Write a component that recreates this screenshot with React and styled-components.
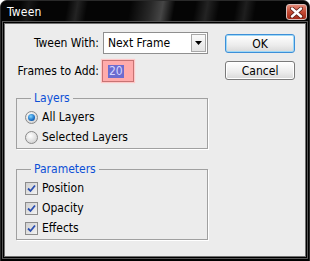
import styled, { createGlobalStyle } from 'styled-components';

const GlobalStyle = createGlobalStyle`
	html, body {
		margin: 0;
		padding: 0;
		background: #fff;
		overflow: hidden;
	}
	body {
		font-family: "DejaVu Sans Condensed", "DejaVu Sans", sans-serif;
		font-size: 12px;
	}
`;

const App = () => {
	return (
		<>
			<GlobalStyle />
			<Window>
				<TitleBar>
					<Title>Tween</Title>
					<CloseButton aria-label="close">
						<svg width="13" height="11" viewBox="0 0 13 11">
							<path d="M2 1.5 L11 9.5 M11 1.5 L2 9.5" stroke="#5a1a12" strokeWidth="4" strokeLinecap="round" />
							<path d="M2 1.5 L11 9.5 M11 1.5 L2 9.5" stroke="#fff" strokeWidth="2.4" strokeLinecap="round" />
						</svg>
					</CloseButton>
				</TitleBar>

				<Body>
					<MainColumn>
						<FormGrid>
							<Label>Tween With:</Label>
							<Select>
								<span>Next Frame</span>
								<DropButton>
									<svg width="7" height="4" viewBox="0 0 7 4">
										<path d="M0 0 H7 L3.5 4 Z" fill="#000" />
									</svg>
								</DropButton>
							</Select>

							<Label>Frames to Add:</Label>
							<NumberInput>
								<Selected>20</Selected>
							</NumberInput>
						</FormGrid>

						<Group>
							<Legend>Layers</Legend>
							<Option>
								<Radio $checked />
								All Layers
							</Option>
							<Option>
								<Radio />
								Selected Layers
							</Option>
						</Group>

						<Group $spaced>
							<Legend>Parameters</Legend>
							<Option>
								<CheckBox />
								Position
							</Option>
							<Option>
								<CheckBox />
								Opacity
							</Option>
							<Option>
								<CheckBox />
								Effects
							</Option>
						</Group>
					</MainColumn>

					<ButtonColumn>
						<Button $default>OK</Button>
						<Button>Cancel</Button>
					</ButtonColumn>
				</Body>
			</Window>
		</>
	);
};

const CheckBox = () => (
	<CheckFrame>
		<svg width="9" height="9" viewBox="0 0 9 9">
			<path d="M1 4.5 L3.5 7 L8 1.5" stroke="#2b4fb0" strokeWidth="1.8" fill="none" />
		</svg>
	</CheckFrame>
);

export default App;

const Window = styled.div`
	width: 310px;
	height: 261px;
	box-sizing: border-box;
	background: #000;
	border-radius: 7px 7px 0 0;
	border: 1px solid #2a2a2a;
	border-bottom: none;
	display: flex;
	flex-direction: column;
	padding: 0 2px 3px 2px;
`;

const TitleBar = styled.div`
	height: 22px;
	flex-shrink: 0;
	display: flex;
	align-items: center;
	justify-content: space-between;
	padding: 0 2px 0 6px;
	margin: 0 -2px;
	border-radius: 6px 6px 0 0;
	background:
		linear-gradient(100deg, transparent 20px, rgba(255,255,255,0.07) 28px, transparent 38px),
		linear-gradient(100deg, transparent 66px, rgba(255,255,255,0.12) 76px, transparent 86px),
		linear-gradient(100deg, transparent 128px, rgba(255,255,255,0.14) 148px, rgba(255,255,255,0.26) 160px, transparent 172px),
		linear-gradient(100deg, transparent 192px, rgba(255,255,255,0.12) 204px, transparent 216px),
		linear-gradient(100deg, transparent 232px, rgba(255,255,255,0.1) 242px, transparent 252px),
		#050505;
`;

const Title = styled.span`
	color: #fff;
	font-size: 12px;
	letter-spacing: 0.2px;
	text-shadow: 0 0 1px #000;
`;

const CloseButton = styled.button`
	width: 21px;
	height: 16px;
	padding: 0;
	border: 1px solid #d8c0bc;
	border-radius: 3px;
	background: linear-gradient(#e38a78, #c44a34 50%, #a22a18);
	display: flex;
	align-items: center;
	justify-content: center;
`;

const Body = styled.div`
	flex: 1;
	background: #ececec;
	border: 1px solid #707070;
	box-shadow: 0 0 0 1px #000, 0 0 0 2px #555;
	margin: 0 1px 1px;
	display: flex;
	gap: 17px;
	padding: 8px 10px 0 9px;
	color: #000;
`;

const MainColumn = styled.div`
	width: 195px;
	display: flex;
	flex-direction: column;
`;

const FormGrid = styled.div`
	display: grid;
	grid-template-columns: 89px 1fr;
	row-gap: 6px;
	align-items: center;
	margin-bottom: 9px;
`;

const Label = styled.span`
	text-align: right;
	padding-right: 4px;
	white-space: nowrap;
`;

const Select = styled.div`
	height: 22px;
	box-sizing: border-box;
	border: 1px solid #8f8f8f;
	background: #fff;
	display: flex;
	align-items: center;
	justify-content: space-between;
	padding: 0 1px 0 4px;
`;

const DropButton = styled.span`
	width: 15px;
	height: 18px;
	box-sizing: border-box;
	border: 1px solid #a8a8a8;
	background: linear-gradient(#fafafa, #e4e4e4);
	display: flex;
	align-items: center;
	justify-content: center;
`;

const NumberInput = styled.div`
	width: 32px;
	height: 22px;
	margin-left: -1px;
	box-sizing: border-box;
	border: 1px solid #c77373;
	background: #ffabab;
	box-shadow: 0 0 1px 1px #ffc8c8;
	display: flex;
	align-items: center;
	padding-left: 5px;
`;

const Selected = styled.span`
	background: #6c6ccf;
	color: #d6d6ff;
	line-height: 13px;
	padding: 0 1px;
`;

const Group = styled.fieldset`
	margin: ${(p) => (p.$spaced ? '13px' : '0')} 0 0 2px;
	padding: 2px 0 1px 8px;
	border: 1px solid #a0a0a0;
	box-shadow: 1px 1px 0 #fff;
	min-width: 0;
`;

const Legend = styled.legend`
	color: #0b4fd6;
	padding: 0 3px;
	margin-left: 6px;
	line-height: 14px;
`;

const Option = styled.div`
	height: 20px;
	display: flex;
	align-items: center;
	gap: 4px;
`;

const Radio = styled.span`
	width: 13px;
	height: 13px;
	box-sizing: border-box;
	border-radius: 50%;
	border: 1px solid #8a8a8a;
	background: radial-gradient(circle at 40% 35%, #ffffff, #d8d8d8 70%, #c4c4c4);
	display: flex;
	align-items: center;
	justify-content: center;

	&::after {
		content: '';
		width: 7px;
		height: 7px;
		border-radius: 50%;
		display: ${(p) => (p.$checked ? 'block' : 'none')};
		background: radial-gradient(circle at 40% 35%, #7fd4ff, #1a6fc4 60%, #0b3e86);
	}
`;

const CheckFrame = styled.span`
	width: 13px;
	height: 13px;
	box-sizing: border-box;
	border: 1px solid #8c8c8c;
	background: linear-gradient(135deg, #d0d0d0, #f2f2f2);
	display: flex;
	align-items: center;
	justify-content: center;
`;

const ButtonColumn = styled.div`
	width: 70px;
	display: flex;
	flex-direction: column;
	gap: 8px;
	padding-top: 2px;
`;

const Button = styled.button`
	height: 19px;
	padding: 0;
	font: inherit;
	color: #000;
	border-radius: 3px;
	border: 1px solid ${(p) => (p.$default ? '#3c8fd8' : '#7a7a7a')};
	box-shadow: ${(p) => (p.$default ? 'inset 0 0 0 1px #9fd8f6' : 'inset 0 0 0 1px #fff')};
	background: linear-gradient(#ffffff, #ececec 60%, #d8d8d8);
`;
